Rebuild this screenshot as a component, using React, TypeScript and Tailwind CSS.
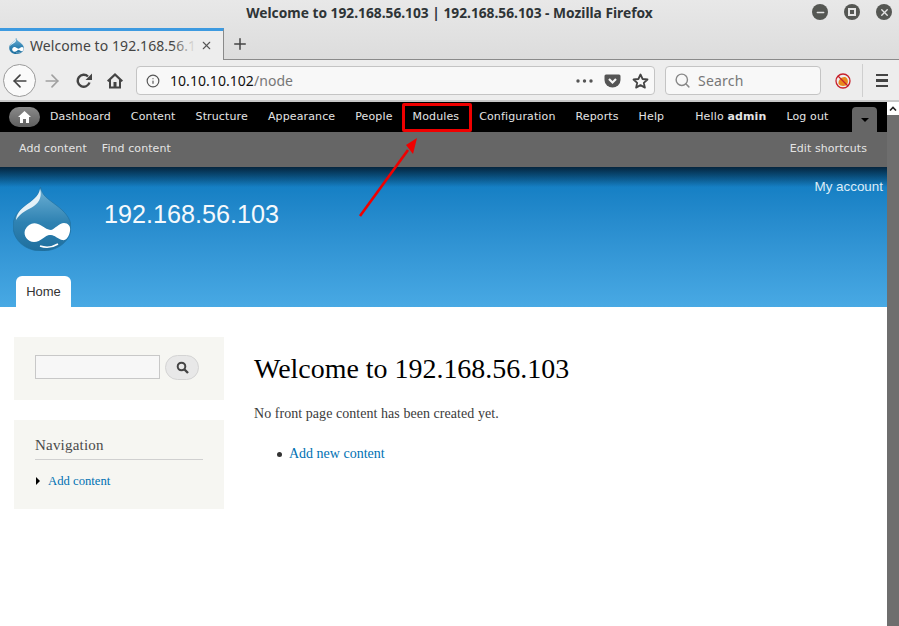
import { ArrowLeft, ArrowRight, Info, Search, Plus, X, Minus } from 'lucide-react';

const adminLinks = ['Dashboard', 'Content', 'Structure', 'Appearance', 'People', 'Modules', 'Configuration', 'Reports', 'Help'];

function DrupalDrop({ width, height }: { width: number; height: number }) {
  return (
    <svg width={width} height={height} viewBox="0 0 58 64" className="shrink-0">
      <defs>
        <linearGradient id="dropFill" x1="0" y1="0" x2="0" y2="1">
          <stop offset="0" stopColor="#6fb2d6" />
          <stop offset="0.55" stopColor="#2f82b2" />
          <stop offset="1" stopColor="#1f6f9e" />
        </linearGradient>
      </defs>
      <path d="M27.5 0 C28.5 8 35 12 43 18 C51 24 58 31 58 40 C58 54 45 64 29 64 C12 64 0 53 0 39 C0 27 9 21 16 16 C21 12 26.5 8 27.5 0 Z" fill="url(#dropFill)" stroke="#1f6f9e" strokeWidth="0.6" />
      <path d="M27 2 C26 9 19 14 12 19 C7 23 3.5 27 3 33 C8 25 15 23 21 19 C27 15 29 8 27 2 Z" fill="#e4f1f8" />
      <path d="M12 43 C15 37 20 35 25 37 C30 39 34 43 38 43 C42 42 46 36 51 36 C55 36 58 39 57 44 C56 50 53 54 49 53 C45 52 42 48 37 48 C32 48 28 55 21 55 C15 55 10 49 12 43 Z" fill="#ffffff" />
      <path d="M27 59 C33 61 40 60 45 57" stroke="#ffffff" strokeWidth="1.6" fill="none" />
      <path d="M32 53 C35 48 39 48 42 51" stroke="#2678a8" strokeWidth="1.4" fill="none" />
    </svg>
  );
}

function WindowButton({ children }: { children: React.ReactNode }) {
  return <div className="w-4 h-4 rounded-full bg-[#555753] flex items-center justify-center text-[#e4e4e4]">{children}</div>;
}

function BrowserChrome() {
  return (
    <div className="h-[102px] shrink-0 bg-gradient-to-b from-[#e8e8e8] to-[#d4d4d4] flex flex-col font-['Noto_Sans',sans-serif] border-b-2 border-[#c8c8c8]">
      <div className="h-[25px] flex items-center relative shrink-0">
        <div className="w-full text-center text-[13.75px] font-bold text-[#2e3436] leading-[24px]">Welcome to 192.168.56.103 | 192.168.56.103 - Mozilla Firefox</div>
        <div className="absolute right-[7px] top-[4px] flex gap-4">
          <WindowButton><Minus size={11} strokeWidth={3} /></WindowButton>
          <WindowButton><div className="w-2 h-2 border-2 border-[#e4e4e4]" /></WindowButton>
          <WindowButton><X size={11} strokeWidth={3} /></WindowButton>
        </div>
      </div>
      <div className="h-[35px] flex items-end shrink-0">
        <div className="w-[224px] h-[32px] bg-[#ededed] border-t-[3px] border-[#3d9ae0] border-r border-r-[#8a8a8a] flex items-center pl-[9px] pr-[11px] relative">
          <DrupalDrop width={15} height={16} />
          <span className="ml-[6px] text-[14px] text-[#444] tracking-[0.07px] whitespace-nowrap">Welcome to 192.168.56.1</span>
          <div className="absolute left-[172px] top-0 bottom-0 w-[24px] bg-gradient-to-r from-transparent to-[#ededed]" />
          <X size={13} strokeWidth={2} className="absolute left-[200px] text-[#555]" />
        </div>
        <div className="flex-1 h-[32px] border-b border-[#8a8a8a] flex items-center pl-[7px]">
          <Plus size={18} strokeWidth={2} className="text-[#444]" />
        </div>
      </div>
      <div className="flex-1 bg-[#ededed] flex items-center pl-[3px] pr-[9px] pt-px">
        <div className="w-[33px] h-[33px] rounded-full border border-[#9a9a9a] bg-[#fafafa] flex items-center justify-center">
          <ArrowLeft size={20} strokeWidth={2} className="text-[#444]" />
        </div>
        <ArrowRight size={20} strokeWidth={2} className="ml-[6px] text-[#a0a0a0]" />
        <svg width="17" height="16" viewBox="0 0 17 16" className="ml-[14px]">
          <path d="M13.5 9.5 A6 6 0 1 1 12 3.5" stroke="#444" strokeWidth="2.4" fill="none" />
          <path d="M16 0.5 V7 H9.5 Z" fill="#444" />
        </svg>
        <svg width="16" height="16" viewBox="0 0 16 16" className="ml-[14px]">
          <path fillRule="evenodd" d="M8 0 L16 7.5 L14.6 9 L14 8.4 V15.5 H2 V8.4 L1.4 9 L0 7.5 Z M8 3 L4 6.7 V13.5 H6.5 V9 H9.5 V13.5 H12 V6.7 Z" fill="#444" />
        </svg>
        <div className="ml-[13px] w-[519px] h-[29px] bg-[#f8f8f8] border border-[#c4c4c4] rounded-[4px] flex items-center pl-[9px] pr-[5px]">
          <Info size={14} className="text-[#555]" />
          <span className="ml-[10px] text-[14px] tracking-[0.05px] text-[#111]">10.10.10.102<span className="text-[#777]">/node</span></span>
          <svg width="17" height="4" viewBox="0 0 17 4" className="ml-auto">
            <circle cx="2" cy="2" r="1.7" fill="#555" /><circle cx="8.5" cy="2" r="1.7" fill="#555" /><circle cx="15" cy="2" r="1.7" fill="#555" />
          </svg>
          <svg width="17" height="14" viewBox="0 0 17 14" className="ml-[11px]">
            <path d="M0.5 2 q0 -1.5 1.5 -1.5 h13 q1.5 0 1.5 1.5 v4 a8 7.5 0 0 1 -16 0 z" fill="#555" />
            <path d="M5 5 l3.5 3.5 l3.5 -3.5" stroke="#f8f8f8" strokeWidth="2.2" fill="none" />
          </svg>
          <svg width="17" height="16" viewBox="0 0 17 16" className="ml-[11px]">
            <path d="M8.5 1.5 L10.6 6 L15.5 6.5 L11.8 9.8 L12.9 14.6 L8.5 12.1 L4.1 14.6 L5.2 9.8 L1.5 6.5 L6.4 6 Z" stroke="#444" strokeWidth="1.8" strokeLinejoin="round" fill="none" />
          </svg>
        </div>
        <div className="ml-[10px] w-[156px] h-[29px] bg-[#f8f8f8] border border-[#c4c4c4] rounded-[4px] flex items-center pl-[8px]">
          <Search size={17} className="text-[#888]" />
          <span className="ml-[7px] text-[14px] tracking-[0.2px] text-[#777]">Search</span>
        </div>
        <svg width="16" height="16" viewBox="0 0 16 16" className="ml-[14px]">
          <path d="M3.5 11 C3 6 8 3 11 4.5 C13.5 6 13.5 11 11 12.5 C8 13.5 5 13 3.5 11 Z" fill="#e8891c" />
          <circle cx="8" cy="8" r="7" fill="none" stroke="#c8202a" strokeWidth="1.3" />
          <path d="M3 3 L13 13" stroke="#c8202a" strokeWidth="1.3" />
        </svg>
        <div className="ml-[11px] w-px h-[33px] bg-[#cfcfcf]" />
        <div className="ml-[13px] w-[12px] flex flex-col gap-[3px]">
          <div className="h-[2.5px] bg-[#444]" />
          <div className="h-[2.5px] bg-[#444]" />
          <div className="h-[2.5px] bg-[#444]" />
        </div>
      </div>
    </div>
  );
}

function AdminToolbar() {
  return (
    <div className="font-['DejaVu_Sans',sans-serif] text-[11px] text-[#e4e4e4]">
      <div className="h-[30px] bg-black flex items-center pl-[9px] relative tracking-[0.13px]">
        <div className="w-[31px] h-[20px] rounded-full bg-gradient-to-b from-[#8a8a8a] to-[#5f5f5f] flex items-center justify-center">
          <svg width="13" height="12" viewBox="0 0 13 12"><path d="M6.5 0 L13 6 H11 V12 H8 V8 H5 V12 H2 V6 H0 Z" fill="#fff" /></svg>
        </div>
        <div className="ml-[10px] flex gap-[20px]">
          {adminLinks.map((l) => <span key={l}>{l}</span>)}
        </div>
        <span className="ml-[31px]">Hello <b>admin</b></span>
        <span className="ml-[20px]">Log out</span>
        <div className="absolute left-[852px] top-[5px] w-[25px] h-[25px] bg-[#666] rounded-t-[4px] flex items-center justify-center">
          <div className="w-0 h-0 border-x-[4px] border-x-transparent border-t-[4px] border-t-black" />
        </div>
      </div>
      <div className="h-[35px] bg-[#666] flex items-center justify-between pl-[19px] pr-[20px] pb-[1px] tracking-[0.08px]">
        <div className="flex gap-[15px]"><span>Add content</span><span>Find content</span></div>
        <span>Edit shortcuts</span>
      </div>
    </div>
  );
}

function SiteHeader() {
  return (
    <div className="h-[140px] bg-gradient-to-b from-[#0779bf] to-[#48a9e4] relative font-['Liberation_Sans',sans-serif] flex flex-col justify-end">
      <div className="absolute top-0 left-0 right-0 h-[20px] bg-gradient-to-b from-[#06263f] to-transparent" />
      <div className="absolute top-[10px] right-[4px] text-[13.4px] text-[#dcecf6]">My account</div>
      <div className="flex items-start flex-1 pl-[13px] pt-[20px] relative">
        <DrupalDrop width={58} height={64} />
        <div className="ml-[33px] mt-[12px] text-[25.2px] leading-[30px] text-[#f5f9fc]">192.168.56.103</div>
      </div>
      <div className="pl-[16px]">
        <div className="w-[55px] h-[31px] bg-white rounded-t-[6px] flex items-center justify-center text-[13px] text-[#333]">Home</div>
      </div>
    </div>
  );
}

function Sidebar() {
  return (
    <div className="w-[210px] flex flex-col gap-[20px] shrink-0">
      <div className="h-[63px] bg-[#f6f6f2] flex items-start pt-[18px] pl-[21px]">
        <div className="w-[125px] h-[24px] bg-[#f7f7f7] border border-[#c8c8c8]" />
        <div className="ml-[5px] w-[34px] h-[25px] rounded-full bg-[#e8e8e8] border border-[#d4d4d4] flex items-center justify-center">
          <svg width="13" height="13" viewBox="0 0 13 13">
            <circle cx="5.5" cy="5.5" r="3.8" stroke="#444" strokeWidth="2" fill="none" />
            <path d="M8.5 8.5 L12 12" stroke="#444" strokeWidth="2.4" />
          </svg>
        </div>
      </div>
      <div className="h-[89px] bg-[#f6f6f2] px-[21px] pt-[14px]">
        <div className="h-[26px] border-b border-[#d0d0d0] text-[15px] leading-[22px] text-[#4a4a4a] tracking-[0.2px]">Navigation</div>
        <div className="mt-[13px] flex items-center text-[12.7px] leading-[16px] text-[#0071b3]">
          <div className="ml-px w-0 h-0 border-y-[4px] border-y-transparent border-l-[4px] border-l-black" />
          <span className="ml-[8px]">Add content</span>
        </div>
      </div>
    </div>
  );
}

export default function App() {
  return (
    <div className="w-[899px] h-[626px] overflow-hidden flex flex-col relative bg-white">
      <BrowserChrome />
      <div className="flex-1 flex min-h-0">
        <div className="flex-1 min-w-0 flex flex-col">
          <AdminToolbar />
          <SiteHeader />
          <div className="flex pl-[14px] pt-[30px] font-['Liberation_Serif',serif]">
            <Sidebar />
            <div className="ml-[30px]">
              <h1 className="text-[27.95px] leading-[36px] text-black mt-[14px]">Welcome to 192.168.56.103</h1>
              <p className="mt-[17px] text-[14px] tracking-[0.05px] leading-[20px] text-[#3b3b3b]">No front page content has been created yet.</p>
              <div className="mt-[20px] pl-[23px] flex items-center text-[14px] leading-[20px] text-[#0071b3]">
                <div className="w-[5px] h-[5px] rounded-full bg-[#333]" />
                <span className="ml-[7px]">Add new content</span>
              </div>
            </div>
          </div>
        </div>
        <div className="w-[12px] shrink-0 flex flex-col bg-[#6e6e6e]">
          <div className="h-[13px] bg-white flex items-center justify-center">
            <svg width="8" height="5" viewBox="0 0 8 5"><path d="M1 4.5 L4 1.5 L7 4.5" stroke="#222" strokeWidth="1.6" fill="none" /></svg>
          </div>
        </div>
      </div>
      {/* annotation over the screenshot */}
      <div className="absolute left-[402px] top-[103px] w-[70px] h-[29px] border-[3px] border-[#f00000] rounded-[2px]" />
      <svg className="absolute left-[350px] top-[130px]" width="80" height="95" viewBox="0 0 80 95">
        <path d="M10 86 L58 20" stroke="#f00000" strokeWidth="2.6" />
        <path d="M67 8 L56 15 L63 24 Z" fill="#f00000" />
      </svg>
    </div>
  );
}
